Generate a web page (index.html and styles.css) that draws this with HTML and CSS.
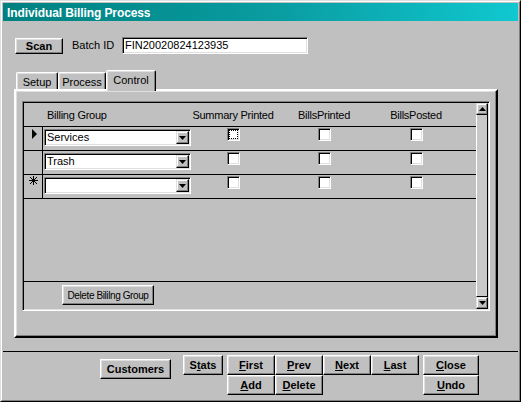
FILE: index.html
```html
<!DOCTYPE html>
<html>
<head>
<meta charset="utf-8">
<link rel="stylesheet" href="styles.css">
</head>
<body>
<div class="window">
  <div class="frame">
    <div class="titlebar">Individual Billing Process</div>
    <div class="detail">
      <div class="toprow">
        <div class="btn btn-scan">Scan</div>
        <span class="lbl">Batch ID</span>
        <div class="textbox">FIN20020824123935</div>
      </div>
      <div class="tabs">
        <div class="tab tab-setup">Setup</div>
        <div class="tab tab-process">Process</div>
        <div class="tab tab-control active">Control</div>
      </div>
      <div class="panel">
        <div class="subform">
          <div class="formarea">
            <div class="hdr">
              <div class="c-sel"></div>
              <div class="c-combo hlabel">Billing Group</div>
              <div class="c-a hlabel center">Summary Printed</div>
              <div class="c-b hlabel center">BillsPrinted</div>
              <div class="c-c hlabel center">BillsPosted</div>
            </div>
            <div class="row">
              <div class="c-sel sel">
                <svg class="cur" width="6" height="11" viewBox="0 0 6 11"><polygon points="0,0 5,5 0,10" fill="#000"/></svg>
              </div>
              <div class="c-combo"><div class="combo"><span class="ctext">Services</span><span class="cbtn"><svg width="7" height="6" viewBox="0 0 7 6"><polygon points="0,0 7,0 3.5,4" fill="#000"/></svg></span></div></div>
              <div class="c-a center"><div class="chk focus"></div></div>
              <div class="c-b center"><div class="chk"></div></div>
              <div class="c-c center"><div class="chk"></div></div>
            </div>
            <div class="row">
              <div class="c-sel sel"></div>
              <div class="c-combo"><div class="combo"><span class="ctext">Trash</span><span class="cbtn"><svg width="7" height="6" viewBox="0 0 7 6"><polygon points="0,0 7,0 3.5,4" fill="#000"/></svg></span></div></div>
              <div class="c-a center"><div class="chk"></div></div>
              <div class="c-b center"><div class="chk"></div></div>
              <div class="c-c center"><div class="chk"></div></div>
            </div>
            <div class="row">
              <div class="c-sel sel">
                <svg class="star" width="9" height="9" viewBox="0 0 9 9"><path d="M4.5 0V9M0 4.5H9M1.2 1.2L7.8 7.8M7.8 1.2L1.2 7.8" stroke="#000" stroke-width="1" fill="none" shape-rendering="crispEdges"/></svg>
              </div>
              <div class="c-combo"><div class="combo"><span class="ctext"></span><span class="cbtn"><svg width="7" height="6" viewBox="0 0 7 6"><polygon points="0,0 7,0 3.5,4" fill="#000"/></svg></span></div></div>
              <div class="c-a center"><div class="chk"></div></div>
              <div class="c-b center"><div class="chk"></div></div>
              <div class="c-c center"><div class="chk"></div></div>
            </div>
            <div class="spacer"></div>
            <div class="ftr">
              <div class="btn btn-del">Delete Bililng Group</div>
            </div>
          </div>
          <div class="vscroll">
            <div class="sbtn"><svg width="7" height="4" viewBox="0 0 7 4"><polygon points="3.5,0 7,4 0,4" fill="#000"/></svg></div>
            <div class="strack"></div>
            <div class="sbtn"><svg width="7" height="4" viewBox="0 0 7 4"><polygon points="0,0 7,0 3.5,4" fill="#000"/></svg></div>
          </div>
        </div>
      </div>
    </div>
    <div class="footer">
      <div class="btn b-cust">Customers</div>
      <div class="btn b-stats">S<u>t</u>ats</div>
      <div class="nav">
        <div class="btn b-nav"><u>F</u>irst</div>
        <div class="btn b-nav"><u>P</u>rev</div>
        <div class="btn b-nav"><u>N</u>ext</div>
        <div class="btn b-nav"><u>L</u>ast</div>
        <div class="btn b-nav"><u>A</u>dd</div>
        <div class="btn b-nav"><u>D</u>elete</div>
      </div>
      <div class="closecol">
        <div class="btn b-close"><u>C</u>lose</div>
        <div class="btn b-close"><u>U</u>ndo</div>
      </div>
    </div>
  </div>
</div>
</body>
</html>
```

FILE: styles.css
```css
* { box-sizing: border-box; }
html, body { margin: 0; padding: 0; }
body {
  width: 521px;
  height: 402px;
  background: #c0c0c0;
  font-family: "Liberation Sans", Arial, sans-serif;
  font-size: 11px;
  color: #000;
  overflow: hidden;
}
.window {
  width: 521px;
  height: 402px;
  border: 1px solid;
  border-color: #dfdfdf #000 #000 #dfdfdf;
}
.frame {
  width: 100%;
  height: 100%;
  border: 1px solid;
  border-color: #fff #808080 #808080 #fff;
  padding: 1px;
  display: flex;
  flex-direction: column;
}
.titlebar {
  height: 18px;
  line-height: 18px;
  padding: 1px 0 0 4px;
  color: #fff;
  font-weight: bold;
  font-size: 12px;
  letter-spacing: -0.1px;
  background: linear-gradient(to right, #008080 0%, #0a9ea3 55%, #10c8d0 100%);
  white-space: nowrap;
}
.detail {
  height: 331px;
  border-bottom: 1px solid #000;
  padding-top: 16px;
}
.toprow {
  display: flex;
  align-items: flex-start;
  padding-left: 12px;
  height: 17px;
}
.btn {
  display: flex;
  align-items: center;
  justify-content: center;
  background: #c0c0c0;
  border: 1px solid;
  border-color: #fff #000 #000 #fff;
  box-shadow: inset -1px -1px 0 #808080, inset 1px 1px 0 #dfdfdf;
  font-weight: bold;
  font-size: 11px;
  white-space: nowrap;
}
.btn u { text-decoration: underline; text-underline-offset: 1px; }
.btn-scan {
  width: 48px;
  height: 16px;
  margin-top: 1px;
}
.lbl {
  width: 50px;
  margin-left: 9px;
  line-height: 17px;
  white-space: nowrap;
}
.textbox {
  width: 186px;
  height: 17px;
  background: #fff;
  border: 1px solid;
  border-color: #808080 #fff #fff #808080;
  box-shadow: inset 1px 1px 0 #000, inset -1px -1px 0 #dfdfdf;
  padding-left: 2px;
  line-height: 15px;
  white-space: nowrap;
}
.tabs {
  display: flex;
  align-items: flex-end;
  height: 19px;
  margin-top: 16px;
  padding-left: 13px;
}
.tab {
  height: 17px;
  border: 1px solid;
  border-bottom: none;
  border-color: #fff #000 transparent #fff;
  border-radius: 2px 2px 0 0;
  box-shadow: inset -1px 0 0 #808080, inset 1px 1px 0 #dfdfdf;
  display: flex;
  align-items: center;
  justify-content: center;
  padding-top: 1px;
  white-space: nowrap;
}
.tab-setup { width: 42px; }
.tab-process { width: 48px; }
.tab-control { width: 50px; }
.tab.active {
  height: 21px;
  margin-bottom: -2px;
  position: relative;
  z-index: 1;
  background: #c0c0c0;
  padding-bottom: 3px;
}
.panel {
  margin-left: 11px;
  width: 484px;
  height: 249px;
  border: 2px solid;
  border-color: #fff #000 #000 #fff;
  box-shadow: inset -1px -1px 0 #808080, inset 1px 1px 0 #dfdfdf;
  padding: 10px 6px 0 6px;
}
.subform {
  width: 468px;
  height: 210px;
  display: flex;
  border: 1px solid;
  border-color: #808080 #fff #fff #808080;
  box-shadow: inset 1px 1px 0 #000, inset -1px -1px 0 #dfdfdf;
  padding: 1px;
}
.formarea {
  width: 452px;
  display: flex;
  flex-direction: column;
}
.hdr, .row {
  display: flex;
  height: 23px;
}
.row {
  height: 24px;
  border-top: 1px solid #000;
}
.c-sel { width: 19px; flex: none; }
.sel { border-right: 1px solid #000; position: relative; }
.c-combo { width: 149px; flex: none; padding-left: 1px; }
.c-a { width: 82px; flex: none; }
.c-b { width: 100px; flex: none; }
.c-c { width: 84px; flex: none; }
.hlabel { display: flex; align-items: center; white-space: nowrap; letter-spacing: -0.25px; }
.hdr .c-combo { padding-left: 4px; padding-top: 1px; }
.hdr .center { padding-top: 1px; }
.center { display: flex; justify-content: center; }
.row .center { align-items: flex-start; padding-top: 1px; }
.cur { position: absolute; left: 8px; top: 2px; }
.star { position: absolute; left: 5px; top: 1px; }
.combo {
  margin-top: 2px;
  width: 147px;
  height: 17px;
  background: #fff;
  border: 1px solid;
  border-color: #808080 #fff #fff #808080;
  box-shadow: inset 1px 1px 0 #000, inset -1px -1px 0 #dfdfdf;
  padding: 1px;
  display: flex;
}
.ctext { flex: 1; padding-left: 1px; line-height: 13px; white-space: nowrap; }
.cbtn {
  width: 13px;
  height: 13px;
  flex: none;
  background: #c0c0c0;
  border: 1px solid;
  border-color: #dfdfdf #000 #000 #dfdfdf;
  box-shadow: inset -1px -1px 0 #808080, inset 1px 1px 0 #fff;
  display: flex;
  align-items: center;
  justify-content: center;
  padding-top: 2px;
}
.cbtn svg { display: block; }
.chk {
  width: 13px;
  height: 13px;
  background: #fff;
  border: 1px solid;
  border-color: #808080 #fff #fff #808080;
  box-shadow: inset 1px 1px 0 #000, inset -1px -1px 0 #dfdfdf;
}
.chk.focus { outline: 1px dotted #000; outline-offset: -3px; }
.spacer {
  height: 83px;
  border-top: 1px solid #000;
}
.ftr {
  height: 28px;
  border-top: 1px solid #000;
  padding: 3px 0 0 38px;
}
.btn-del {
  width: 92px;
  height: 20px;
  font-weight: normal;
  font-size: 10px;
  letter-spacing: -0.4px;
}
.vscroll {
  width: 12px;
  display: flex;
  flex-direction: column;
}
.sbtn {
  height: 12px;
  flex: none;
  background: #c0c0c0;
  border: 1px solid;
  border-color: #dfdfdf #000 #000 #dfdfdf;
  box-shadow: inset -1px -1px 0 #808080, inset 1px 1px 0 #fff;
  display: flex;
  align-items: center;
  justify-content: center;
}
.sbtn svg { display: block; }
.strack {
  flex: 1;
  background: #c8c8c8;
  border-left: 1px solid #fff;
  border-right: 1px solid #000;
  border-bottom: 1px solid #000;
}
.footer {
  display: flex;
  align-items: flex-start;
  padding: 3px 0 0 97px;
}
.b-cust {
  width: 71px;
  height: 20px;
  margin-top: 4px;
}
.b-stats {
  width: 40px;
  height: 20px;
  margin-left: 12px;
}
.nav {
  margin-left: 4px;
  display: grid;
  grid-template-columns: repeat(4, 48px);
  grid-auto-rows: 20px;
}
.b-nav { height: 20px; }
.closecol {
  margin-left: 4px;
  display: grid;
  grid-template-columns: 56px;
  grid-auto-rows: 20px;
}
```
